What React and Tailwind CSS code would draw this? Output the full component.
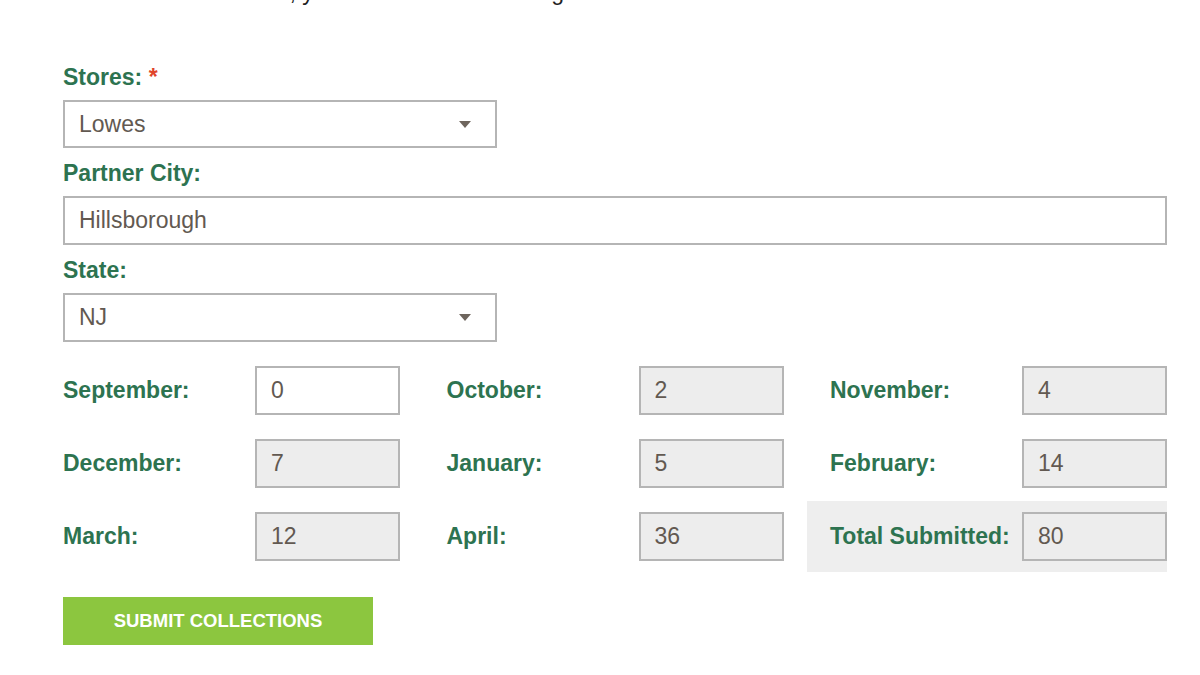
import React from "react";

const font = { fontFamily: '"Liberation Sans", Arial, Helvetica, sans-serif' };

function Arrow() {
  return (
    <svg width="12" height="7" viewBox="0 0 12 7" className="shrink-0">
      <path d="M0 0 L12 0 L6 7 Z" fill="#6e655d" />
    </svg>
  );
}

function Label({ children }) {
  return (
    <div className="text-[23px] leading-[26px] font-bold text-[#2d7350]">{children}</div>
  );
}

function Box({ value, grey }) {
  return (
    <div
      className={
        "w-[145px] h-[49px] border-2 border-[#b5b5b5] flex items-center pl-[14px] text-[23px] text-[#625951] " +
        (grey ? "bg-[#ededed]" : "bg-white")
      }
    >
      {value}
    </div>
  );
}

function Month({ label, value, grey }) {
  return (
    <div className="flex items-center justify-between">
      <div className="text-[23px] font-bold text-[#2d7350]">{label}</div>
      <Box value={value} grey={grey} />
    </div>
  );
}

export default function App() {
  return (
    <div className="w-[1200px] h-[675px] overflow-hidden bg-white" style={font}>
      <div className="pl-[63px] w-[1167px]">
        <div className="-mt-[21px] pl-[13px] text-[23px] leading-[26px] text-[#222222] whitespace-nowrap">
          Once data is entered,{" "}
          <span className="tracking-[-0.45px]">you won't be able to change the totals.</span>
        </div>

        <div className="mt-[59px]">
          <Label>
            Stores: <span className="text-[#e0442b]">*</span>
          </Label>
          <div className="mt-[10px] w-[434px] h-[48px] border-2 border-[#b5b5b5] flex items-center justify-between pl-[14px] pr-[24px] text-[23px] text-[#625951]">
            <span>Lowes</span>
            <Arrow />
          </div>
        </div>

        <div className="mt-[12px]">
          <Label>Partner City:</Label>
          <div className="mt-[10px] w-full h-[49px] border-2 border-[#b5b5b5] flex items-center pl-[14px] text-[23px] text-[#625951]">
            Hillsborough
          </div>
        </div>

        <div className="mt-[12px]">
          <Label>State:</Label>
          <div className="mt-[10px] w-[434px] h-[49px] border-2 border-[#b5b5b5] flex items-center justify-between pl-[14px] pr-[24px] text-[23px] text-[#625951]">
            <span>NJ</span>
            <Arrow />
          </div>
        </div>

        <div className="mt-[24px] grid grid-cols-3 gap-x-[46.5px] gap-y-[24px]">
          <Month label="September:" value="0" />
          <Month label="October:" value="2" grey />
          <Month label="November:" value="4" grey />
          <Month label="December:" value="7" grey />
          <Month label="January:" value="5" grey />
          <Month label="February:" value="14" grey />
          <Month label="March:" value="12" grey />
          <Month label="April:" value="36" grey />
          <div className="-ml-[23px] pl-[23px] -my-[11px] py-[11px] bg-[#eeeeee]">
            <Month label="Total Submitted:" value="80" grey />
          </div>
        </div>

        <button className="mt-[36px] w-[310px] h-[48px] bg-[#8cc63f] text-white font-bold text-[18.5px] flex items-center justify-center">
          SUBMIT COLLECTIONS
        </button>
      </div>
    </div>
  );
}
